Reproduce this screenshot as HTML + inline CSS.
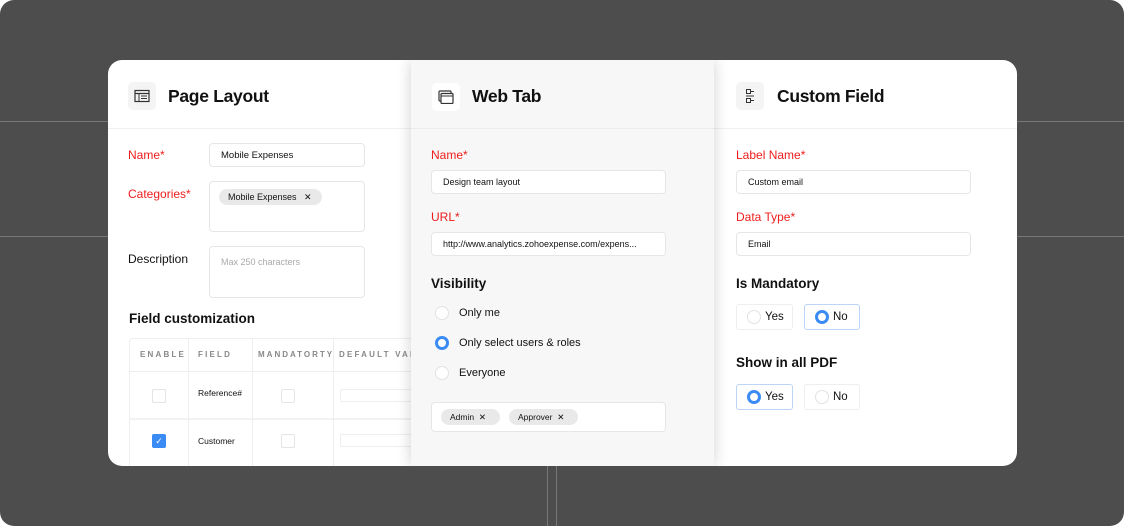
<!DOCTYPE html><html><head><style>
*{box-sizing:border-box;margin:0;padding:0}
body{width:1124px;height:526px;background:#fff;font-family:"Liberation Sans",sans-serif;position:relative;overflow:hidden;color:#111}
.bg{position:absolute;left:0;top:0;width:1124px;height:526px;background:#4d4d4d;border-radius:14px}
.hl{position:absolute;height:1px;background:#777}
.vl{position:absolute;width:1px;background:#777}
.card{position:absolute;left:108px;top:60px;width:909px;height:406px;background:#fff;border-radius:14px;overflow:hidden}
.mid{position:absolute;left:303px;top:0;width:303px;height:406px;background:#f7f7f7;box-shadow:0 0 14px rgba(0,0,0,.18)}
.a{position:absolute}
.ic{position:absolute;width:28px;height:28px;border-radius:5px;background:#f4f4f4;display:flex;align-items:center;justify-content:center}
.title{position:absolute;font-size:17.5px;font-weight:bold;letter-spacing:-.3px;top:26px!important}
.div{position:absolute;left:0;width:909px;height:1px;background:#f0f0f0;top:68px}
.red{position:absolute;color:#ee1c1c;font-size:12px}
.lbl{position:absolute;font-size:12px}
.in{position:absolute;border:1px solid #e6e6e6;border-radius:4px;background:#fff;font-size:9.5px;padding-left:11px;display:flex;align-items:center}
.chip{position:absolute;background:#e9e9e9;border-radius:9px;font-size:9px;display:flex;align-items:center;padding-left:9px}
.h{position:absolute;font-size:13.5px;font-weight:bold}
.rad{position:absolute;width:14px;height:14px;border-radius:50%;border:1px solid #e2e2e2;background:#fff}
.rad.on{border:3.5px solid #3b8bf5}
.btn{position:absolute;width:57px;height:26px;border:1px solid #eee;border-radius:3px;background:#fff;font-size:11.5px}
.btn.on{border-color:#bcd4f5}
.btn .rad{left:10px;top:5px}
.btn span{position:absolute;left:28px;top:6px}
.th{position:absolute;font-size:8px;letter-spacing:2.2px;color:#888;font-weight:bold}
.cb{position:absolute;width:14px;height:14px;border:1px solid #e4e4e4;border-radius:2px}
</style></head><body>
<div class="bg"></div>
<div class="hl" style="left:0;top:121px;width:1124px"></div>
<div class="hl" style="left:0;top:236px;width:1124px"></div>
<div class="vl" style="left:547px;top:466px;height:60px"></div>
<div class="vl" style="left:556px;top:466px;height:60px"></div>
<div class="card">
<div class="div"></div>
<div class="ic" style="left:20px;top:22px"><svg width="16" height="14" viewBox="0 0 16 14"><rect x="1" y="1.5" width="14" height="11" fill="none" stroke="#333" stroke-width="1.2"/><line x1="1" y1="4.5" x2="15" y2="4.5" stroke="#333" stroke-width="1.2"/><line x1="5" y1="4.5" x2="5" y2="12.5" stroke="#333"/><line x1="7" y1="7" x2="13" y2="7" stroke="#333"/><line x1="7" y1="9.5" x2="13" y2="9.5" stroke="#333"/></svg></div>
<div class="title" style="left:60px;top:25px">Page Layout</div>
<div class="red" style="left:20px;top:88px">Name*</div>
<div class="in" style="left:101px;top:83px;width:156px;height:24px">Mobile Expenses</div>
<div class="red" style="left:20px;top:127px">Categories*</div>
<div class="in" style="left:101px;top:121px;width:156px;height:51px"></div>
<div class="chip" style="left:111px;top:129px;width:103px;height:16px">Mobile Expenses&nbsp;&nbsp;&nbsp;✕</div>
<div class="lbl" style="left:20px;top:192px">Description</div>
<div class="in" style="left:101px;top:186px;width:156px;height:52px;align-items:flex-start;padding-top:10px;color:#aaa;font-size:9px">Max 250 characters</div>
<div class="h" style="left:21px;top:251px">Field customization</div>
<div class="a" style="left:21px;top:278px;width:290px;height:140px;border:1px solid #eee;border-radius:4px"></div>
<div class="a" style="left:21px;top:311px;width:290px;height:1px;background:#eee"></div>
<div class="a" style="left:21px;top:358px;width:290px;height:2px;background:#f2f2f2"></div>
<div class="a" style="left:80px;top:278px;width:1px;height:140px;background:#eee"></div>
<div class="a" style="left:144px;top:278px;width:1px;height:140px;background:#eee"></div>
<div class="a" style="left:225px;top:278px;width:1px;height:140px;background:#eee"></div>
<div class="th" style="left:32px;top:290px">ENABLE</div>
<div class="th" style="left:90px;top:290px">FIELD</div>
<div class="th" style="left:150px;top:290px;letter-spacing:2px">MANDATORTY</div>
<div class="th" style="left:231px;top:290px">DEFAULT VALUE</div>
<div class="cb" style="left:44px;top:329px"></div>
<div class="a" style="left:90px;top:328px;font-size:8.5px">Reference#</div>
<div class="cb" style="left:173px;top:329px"></div>
<div class="a" style="left:232px;top:329px;width:80px;height:13px;border:1px solid #eee;border-radius:2px"></div>
<div class="cb" style="left:44px;top:374px;background:#3b8bf5;border-color:#3b8bf5;color:#fff;font-size:9px;text-align:center;line-height:12px">✓</div>
<div class="a" style="left:90px;top:376px;font-size:8.5px">Customer</div>
<div class="cb" style="left:173px;top:374px"></div>
<div class="a" style="left:232px;top:374px;width:80px;height:13px;border:1px solid #eee;border-radius:2px"></div>
<div class="mid">
<div class="a" style="left:0;top:68px;width:303px;height:1px;background:#ececec"></div>
<div class="ic" style="left:21px;top:23px;background:#fff"><svg width="16" height="14" viewBox="0 0 16 14"><rect x="1" y="1" width="12" height="10" rx="1" fill="none" stroke="#333" stroke-width="1.2"/><rect x="3" y="3.5" width="12" height="10" rx="1" fill="#fff" stroke="#333" stroke-width="1.2"/><line x1="3" y1="6" x2="15" y2="6" stroke="#333"/></svg></div>
<div class="title" style="left:61px;top:25px">Web Tab</div>
<div class="red" style="left:20px;top:88px">Name*</div>
<div class="in" style="left:20px;top:110px;width:235px;height:24px;font-size:9px">Design team layout</div>
<div class="red" style="left:20px;top:150px">URL*</div>
<div class="in" style="left:20px;top:172px;width:235px;height:24px;font-size:9px">http://www.analytics.zohoexpense.com/expens...</div>
<div class="h" style="left:20px;top:216px">Visibility</div>
<div class="rad" style="left:24px;top:246px"></div><div class="lbl" style="left:48px;top:247px;font-size:11px">Only me</div>
<div class="rad on" style="left:24px;top:276px"></div><div class="lbl" style="left:48px;top:277px;font-size:11px">Only select users &amp; roles</div>
<div class="rad" style="left:24px;top:306px"></div><div class="lbl" style="left:48px;top:307px;font-size:11px">Everyone</div>
<div class="in" style="left:20px;top:342px;width:235px;height:30px"></div>
<div class="chip" style="left:30px;top:349px;width:59px;height:16px;font-size:8.5px">Admin&nbsp;&nbsp;✕</div>
<div class="chip" style="left:98px;top:349px;width:69px;height:16px;font-size:8.5px">Approver&nbsp;&nbsp;✕</div>
</div>
<div class="ic" style="left:628px;top:22px"><svg width="10" height="16" viewBox="0 0 10 16"><rect x="1.5" y="1.5" width="4" height="4" fill="none" stroke="#333"/><line x1="1" y1="8" x2="9" y2="8" stroke="#333"/><rect x="1.5" y="10.5" width="4" height="4" fill="none" stroke="#333"/><line x1="6" y1="3.5" x2="9" y2="3.5" stroke="#333"/><line x1="6" y1="12.5" x2="9" y2="12.5" stroke="#333"/></svg></div>
<div class="title" style="left:669px;top:25px">Custom Field</div>
<div class="red" style="left:628px;top:88px">Label Name*</div>
<div class="in" style="left:628px;top:110px;width:235px;height:24px;font-size:9px">Custom email</div>
<div class="red" style="left:628px;top:150px">Data Type*</div>
<div class="in" style="left:628px;top:172px;width:235px;height:24px;font-size:9px">Email</div>
<div class="h" style="left:628px;top:216px">Is Mandatory</div>
<div class="btn" style="left:628px;top:244px"><div class="rad"></div><span>Yes</span></div>
<div class="btn on" style="left:696px;top:244px;width:56px"><div class="rad on"></div><span>No</span></div>
<div class="h" style="left:628px;top:295px">Show in all PDF</div>
<div class="btn on" style="left:628px;top:324px"><div class="rad on"></div><span>Yes</span></div>
<div class="btn" style="left:696px;top:324px;width:56px"><div class="rad"></div><span>No</span></div>
</div>
</body></html>
